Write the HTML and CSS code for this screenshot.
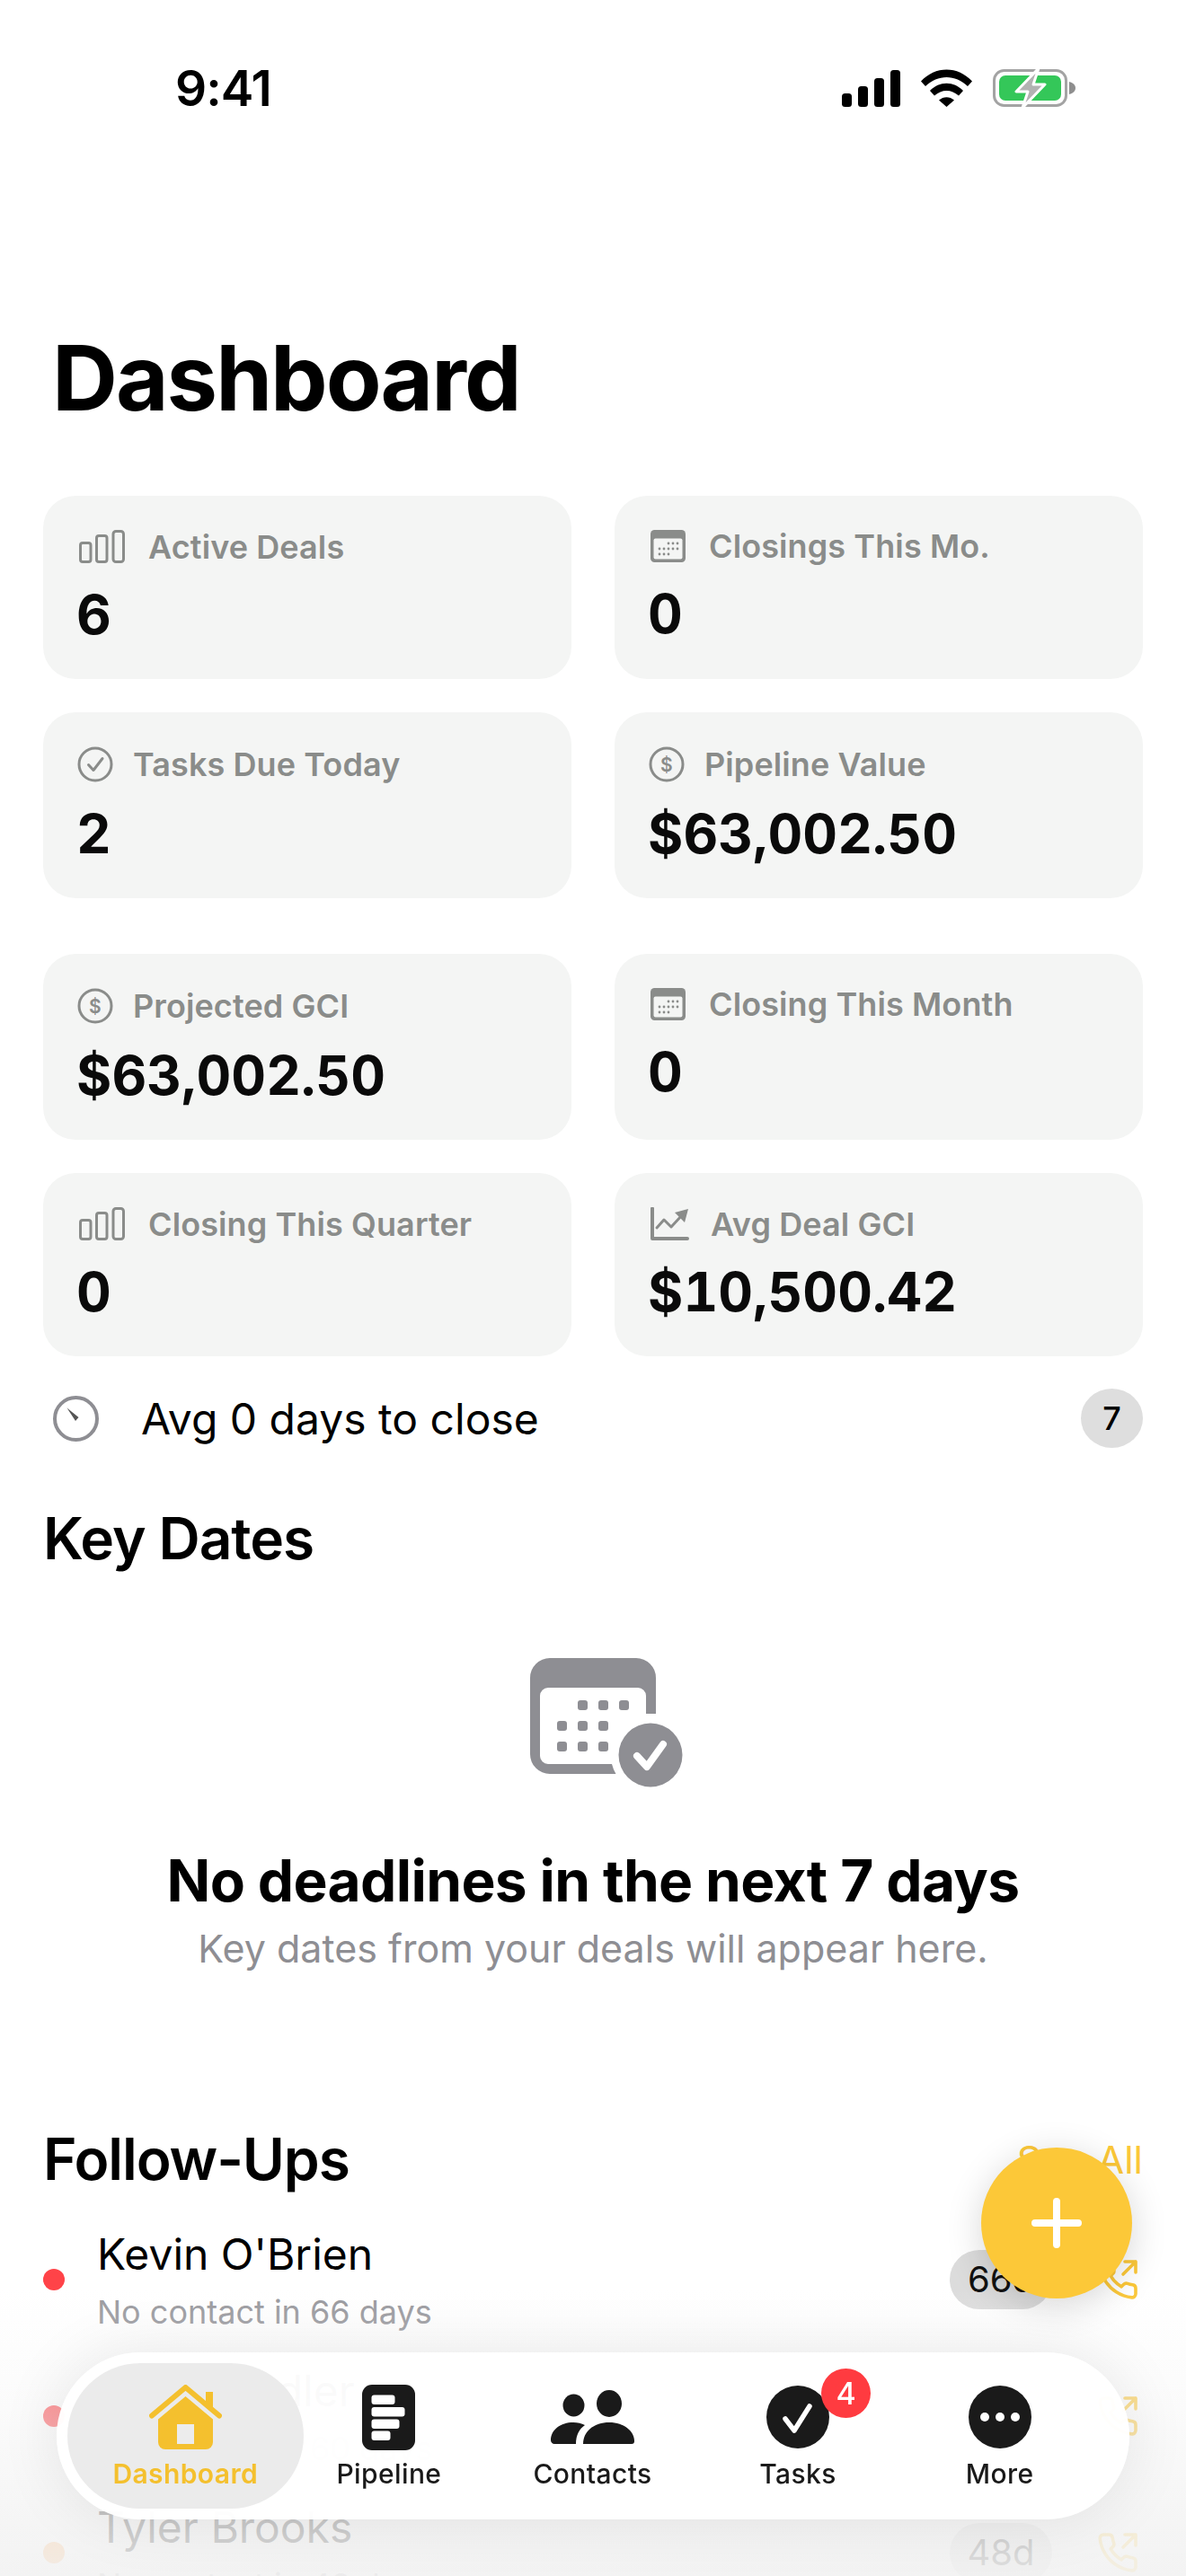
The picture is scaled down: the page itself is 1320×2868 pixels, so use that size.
FILE: index.html
```html
<!DOCTYPE html>
<html>
<head>
	<meta charset="UTF-8">
	<title>Dashboard</title>
	<link rel="stylesheet" href="styles.css">
</head>
<body>

	<svg class="defs" width="0" height="0">
		<symbol id="bars" viewBox="0 0 51 37">
			<rect x="1.5" y="14.5" width="11.5" height="21" rx="2.5"/>
			<rect x="19.5" y="6.5" width="11.5" height="29" rx="2.5"/>
			<rect x="38" y="1.5" width="11.5" height="34" rx="3"/>
		</symbol>
		<symbol id="cal" viewBox="0 0 39 36">
			<rect width="39" height="36" rx="4.5" fill="#8a8c8a"/>
			<rect x="3.5" y="9.5" width="32" height="23" rx="2" fill="#f4f5f4"/>
			<g fill="#8a8c8a">
				<circle cx="20" cy="15" r="1.4"/><circle cx="25" cy="15" r="1.4"/><circle cx="30" cy="15" r="1.4"/>
				<circle cx="10" cy="21" r="1.4"/><circle cx="15" cy="21" r="1.4"/><circle cx="20" cy="21" r="1.4"/><circle cx="25" cy="21" r="1.4"/><circle cx="30" cy="21" r="1.4"/>
				<circle cx="10" cy="27" r="1.4"/><circle cx="15" cy="27" r="1.4"/><circle cx="20" cy="27" r="1.4"/>
			</g>
		</symbol>
		<symbol id="phone" viewBox="0 0 24 24">
			<path d="M16 2h6v6M22 2l-7 7"/>
			<path d="M22 16.92v3a2 2 0 0 1-2.18 2 19.79 19.79 0 0 1-8.63-3.07 19.5 19.5 0 0 1-6-6 19.79 19.79 0 0 1-3.07-8.67A2 2 0 0 1 4.11 2h3a2 2 0 0 1 2 1.72 12.84 12.84 0 0 0 .7 2.81 2 2 0 0 1-.45 2.11L8.09 9.91a16 16 0 0 0 6 6l1.27-1.27a2 2 0 0 1 2.11-.45 12.84 12.84 0 0 0 2.81.7A2 2 0 0 1 22 16.92z"/>
		</symbol>
	</svg>

	<div class="screen">

		<!-- status bar -->
		<div class="status">
			<span class="time">9:41</span>
			<div class="status-icons">
				<svg width="65" height="41" viewBox="0 0 65 41"><rect y="26" width="11" height="15" rx="3.5"/><rect x="18" y="18" width="11" height="23" rx="3.5"/><rect x="36" y="9" width="11" height="32" rx="3.5"/><rect x="54" y="0" width="11" height="41" rx="3.5"/></svg>
				<svg width="57" height="42" viewBox="0 0 57 42"><path d="M0 13.5C15.500 -4 41.500 -4 57 13.500L52 19C38.500 5.500 18.500 5.500 5 19Z"/><path d="M10 24C20.500 13 36.500 13 47 24L42 29.500C34 22 23 22 15 29.500Z"/><path d="M20 34.500C25 30 32 30 37 34.500L28.500 42Z"/></svg>
				<svg width="93" height="44" viewBox="0 0 93 44">
					<rect x="1.500" y="2.500" width="80" height="39" rx="11" fill="none" stroke="#a3a3a3" stroke-width="3"/>
					<rect x="7" y="8" width="69" height="28" rx="7" fill="#34c759"/>
					<path d="M85 15c4 1 7 3.500 7 7s-3 6-7 7z" fill="#8e8e8e"/>
					<path d="M51 0 26 26h13L33 44 58 18H45Z" fill="#b2b2b2" stroke="#fff" stroke-width="3" stroke-linejoin="round"/>
				</svg>
			</div>
		</div>

		<h1 class="title">Dashboard</h1>

		<!-- stat cards -->
		<div class="stats">
			<div class="card">
				<div class="card-label"><svg class="ico" width="51" height="37"><use href="#bars"/></svg>Active Deals</div>
				<div class="card-value">6</div>
			</div>
			<div class="card">
				<div class="card-label"><svg width="39" height="36"><use href="#cal"/></svg>Closings This Mo.</div>
				<div class="card-value">0</div>
			</div>
			<div class="card">
				<div class="card-label"><svg class="round" width="40" height="40" viewBox="0 0 40 40"><circle class="ico" cx="20" cy="20" r="18"/><path class="ico" d="M12.500 20.500l5.500 6 10-13"/></svg>Tasks Due Today</div>
				<div class="card-value">2</div>
			</div>
			<div class="card">
				<div class="card-label"><svg class="round" width="40" height="40" viewBox="0 0 40 40"><circle class="ico" cx="20" cy="20" r="18"/><text class="ico-text" x="20" y="27.500" text-anchor="middle">$</text></svg>Pipeline Value</div>
				<div class="card-value">$63,002.50</div>
			</div>
		</div>

		<div class="stats stats-second">
			<div class="card">
				<div class="card-label"><svg class="round" width="40" height="40" viewBox="0 0 40 40"><circle class="ico" cx="20" cy="20" r="18"/><text class="ico-text" x="20" y="27.500" text-anchor="middle">$</text></svg>Projected GCI</div>
				<div class="card-value">$63,002.50</div>
			</div>
			<div class="card">
				<div class="card-label"><svg width="39" height="36"><use href="#cal"/></svg>Closing This Month</div>
				<div class="card-value">0</div>
			</div>
			<div class="card">
				<div class="card-label"><svg class="ico" width="51" height="37"><use href="#bars"/></svg>Closing This Quarter</div>
				<div class="card-value">0</div>
			</div>
			<div class="card">
				<div class="card-label"><svg class="chart" width="43" height="37" viewBox="0 0 43 37"><path class="ico ico-thick" d="M2 1.500V35H41"/><path class="ico" d="M7 23l8-9 8 8 12-13"/><path d="M27 6 42 2 38 17Z" fill="#8a8c8a"/></svg>Avg Deal GCI</div>
				<div class="card-value">$10,500.42</div>
			</div>
		</div>

		<div class="avg-row">
			<svg width="51" height="51" viewBox="0 0 51 51"><circle cx="25.500" cy="25.500" r="23.500" fill="none" stroke="#8e8e93" stroke-width="4"/><path d="M15.500 13.500l13 10.500-3.500 4z" fill="#555"/></svg>
			<span class="avg-text">Avg 0 days to close</span>
			<span class="count">7</span>
		</div>

		<h2 class="section-title key-title">Key Dates</h2>

		<!-- empty state -->
		<div class="empty">
			<svg width="170" height="144" viewBox="0 0 170 144">
				<path d="M22 0H118a22 22 0 0 1 22 22V62H129V42a9 9 0 0 0-9-9H20a9 9 0 0 0-9 9V109a9 9 0 0 0 9 9H91q1.500 6 4.500 11H22A22 22 0 0 1 0 107V22A22 22 0 0 1 22 0Z" fill="#8e8e93"/>
				<g fill="#8e8e93">
					<rect x="53" y="47" width="11" height="11" rx="3"/><rect x="76" y="47" width="11" height="11" rx="3"/><rect x="99" y="47" width="11" height="11" rx="3"/>
					<rect x="30" y="70" width="11" height="11" rx="3"/><rect x="53" y="70" width="11" height="11" rx="3"/><rect x="76" y="70" width="11" height="11" rx="3"/>
					<rect x="30" y="93" width="11" height="11" rx="3"/><rect x="53" y="93" width="11" height="11" rx="3"/><rect x="76" y="93" width="11" height="11" rx="3"/>
					<circle cx="134" cy="108" r="35.500"/>
				</g>
				<path d="M119 109l11 12 18-25" fill="none" stroke="#fff" stroke-width="8" stroke-linecap="round" stroke-linejoin="round"/>
			</svg>
			<h3 class="empty-title">No deadlines in the next 7 days</h3>
			<p class="empty-sub">Key dates from your deals will appear here.</p>
		</div>

		<!-- follow ups -->
		<div class="section-head">
			<h2 class="section-title">Follow-Ups</h2>
			<span class="see-all">See All</span>
		</div>

		<div class="follow-list">
			<div class="follow">
				<span class="dot dot-red"></span>
				<div class="follow-body">
					<div class="follow-name">Kevin O'Brien</div>
					<div class="follow-sub">No contact in 66 days</div>
				</div>
				<span class="days">66d</span>
				<svg class="phone" width="48" height="48"><use href="#phone"/></svg>
			</div>
			<div class="follow">
				<span class="dot dot-red"></span>
				<div class="follow-body">
					<div class="follow-name">Rachel Adler</div>
					<div class="follow-sub">No contact in 60 days</div>
				</div>
				<span class="days">60d</span>
				<svg class="phone" width="48" height="48"><use href="#phone"/></svg>
			</div>
			<div class="follow">
				<span class="dot dot-orange"></span>
				<div class="follow-body">
					<div class="follow-name">Tyler Brooks</div>
					<div class="follow-sub">No contact in 48 days</div>
				</div>
				<span class="days">48d</span>
				<svg class="phone" width="48" height="48"><use href="#phone"/></svg>
			</div>
		</div>

		<div class="fade"></div>

		<div class="fab">
			<svg width="56" height="56" viewBox="0 0 56 56"><path d="M28 4v48M4 28h48" stroke="#fff" stroke-width="8" stroke-linecap="round"/></svg>
		</div>

		<!-- tab bar -->
		<nav class="tabbar">
			<div class="tab active">
				<div class="tab-icon">
					<svg width="81" height="72" viewBox="0 0 81 72">
						<path d="M3 34.500 40.500 3 78 34.500" fill="none" stroke="#f4c02e" stroke-width="6" stroke-linecap="round" stroke-linejoin="round"/>
						<path d="M63 8h8v24l-8-7z" fill="#f4c02e"/>
						<path d="M40.500 13 71 38.500V64a8 8 0 0 1-8 8H18a8 8 0 0 1-8-8V38.500Z" fill="#f4c02e"/>
						<rect x="31" y="44" width="19" height="22" fill="#ececec"/>
					</svg>
				</div>
				<span class="tab-label">Dashboard</span>
			</div>
			<div class="tab">
				<div class="tab-icon">
					<svg width="59" height="73" viewBox="0 0 59 73">
						<rect width="59" height="73" rx="11" fill="#1a1a1a"/>
						<g fill="#fff">
							<rect x="10.500" y="11.500" width="26" height="10.500" rx="3"/>
							<rect x="10.500" y="25" width="37" height="10.500" rx="3"/>
							<rect x="10.500" y="38.500" width="31" height="10.500" rx="3"/>
							<rect x="10.500" y="51.500" width="21" height="10.500" rx="3"/>
						</g>
					</svg>
				</div>
				<span class="tab-label">Pipeline</span>
			</div>
			<div class="tab">
				<div class="tab-icon">
					<svg width="93" height="60" viewBox="0 0 93 60">
						<g fill="#1a1a1a">
							<ellipse cx="25.500" cy="17" rx="12" ry="12.500"/>
							<path d="M0 56C0 44 11 36 25 36c5 0 9 1 13 3-6 4-10 11-10 21H4c-2 0-4-2-4-4Z"/>
							<ellipse cx="65" cy="15" rx="14" ry="15"/>
							<path d="M36 60c0-14 12-24 29-24s28 10 28 21c0 2-1 3-3 3Z"/>
						</g>
					</svg>
				</div>
				<span class="tab-label">Contacts</span>
			</div>
			<div class="tab tab-tasks">
				<div class="tab-icon">
					<svg width="70" height="70" viewBox="0 0 70 70">
						<circle cx="35" cy="35" r="35" fill="#1a1a1a"/>
						<path d="M21 37l10 13 17-27" fill="none" stroke="#fff" stroke-width="5.500" stroke-linecap="round" stroke-linejoin="round"/>
					</svg>
					<span class="badge">4</span>
				</div>
				<span class="tab-label">Tasks</span>
			</div>
			<div class="tab">
				<div class="tab-icon">
					<svg width="70" height="70" viewBox="0 0 70 70">
						<circle cx="35" cy="35" r="35" fill="#1a1a1a"/>
						<g fill="#fff"><circle cx="18" cy="35" r="5"/><circle cx="35" cy="35" r="5"/><circle cx="52" cy="35" r="5"/></g>
					</svg>
				</div>
				<span class="tab-label">More</span>
			</div>
		</nav>

	</div>
</body>
</html>
```

FILE: styles.css
```css
* { margin: 0; padding: 0; box-sizing: border-box; }

html, body {
	width: 100%;
	height: 100%;
	background: #fff;
	color: #000;
	font-family: Inter, "Liberation Sans", sans-serif;
}

.defs {
	position: absolute;
}

.screen {
	position: relative;
	width: 1320px;
	height: 2868px;
	overflow: hidden;
	background: #fff;
}

/* status bar */
.status {
	display: flex;
	justify-content: space-between;
	align-items: center;
	height: 60px;
	margin-top: 68px;
	padding: 0 122px 0 195px;
}
.time {
	font-size: 55px;
	font-weight: 600;
	letter-spacing: -1px;
}
.status-icons {
	display: flex;
	align-items: center;
	gap: 23px;
}

.title {
	margin: 234px 0 74px 58px;
	font-size: 101px;
	line-height: 116px;
	font-weight: 700;
	letter-spacing: -2px;
}

/* stat cards */
.stats {
	display: grid;
	grid-template-columns: 588px 588px;
	gap: 37px 48px;
	padding: 0 48px;
}
.stats-second {
	margin-top: 62px;
}
.card {
	padding: 38px 40px 34px;
	border-radius: 36px;
	background: #f4f5f4;
}
.card-label {
	display: flex;
	align-items: center;
	gap: 26px;
	font-size: 36px;
	line-height: 36px;
	font-weight: 600;
	letter-spacing: .1px;
	color: #8a8c8a;
}
.card-label svg {
	flex: none;
}
.card-label .round {
	margin: 0 -4px 0 -2px;
}
.card-label .chart {
	margin-right: -2px;
}
.ico {
	fill: none;
	stroke: #8a8c8a;
	stroke-width: 3;
	stroke-linecap: round;
	stroke-linejoin: round;
}
.ico-thick {
	stroke-width: 4;
}
.ico-text {
	fill: #8a8c8a;
	font-size: 21px;
	font-weight: 600;
}
.card-value {
	margin: 19px 0 0 -3px;
	font-size: 60px;
	line-height: 76px;
	font-weight: 700;
	font-variant-numeric: tabular-nums;
	letter-spacing: .1px;
	color: #0a0a0a;
}

.avg-row {
	display: flex;
	align-items: center;
	margin-top: 36px;
	padding: 0 48px 0 59px;
}
.avg-text {
	flex: 1;
	margin-left: 47px;
	font-size: 48px;
}
.count {
	width: 69px;
	height: 66px;
	border-radius: 50%;
	background: #dedede;
	font-size: 36px;
	font-weight: 500;
	line-height: 66px;
	text-align: center;
}

.section-title {
	font-size: 64px;
	line-height: 76px;
	font-weight: 600;
	letter-spacing: -1.1px;
}
.key-title {
	margin: 63px 0 0 48px;
}

/* empty state */
.empty {
	padding-top: 95px;
	text-align: center;
}
.empty svg {
	display: block;
	margin: 0 0 0 590px;
}
.empty-title {
	margin-top: 64px;
	font-size: 64px;
	line-height: 80px;
	font-weight: 700;
	letter-spacing: -.65px;
}
.empty-sub {
	margin-top: 5px;
	font-size: 43px;
	line-height: 60px;
	color: #8e8e93;
}

/* follow ups */
.section-head {
	display: flex;
	justify-content: space-between;
	align-items: center;
	margin-top: 167px;
	padding: 0 48px;
}
.see-all {
	font-size: 43px;
	color: #fcc838;
}
.follow-list {
	display: flex;
	flex-direction: column;
	gap: 30px;
	margin-top: 35px;
	padding: 0 48px;
}
.follow {
	display: flex;
	align-items: center;
	height: 122px;
}
.dot {
	flex: none;
	width: 24px;
	height: 24px;
	margin-right: 36px;
	border-radius: 50%;
}
.dot-red { background: #ff4348; }
.dot-orange { background: #ff9f43; }
.follow-body {
	flex: 1;
}
.follow-name {
	font-size: 48px;
	line-height: 64px;
}
.follow-sub {
	margin-top: 8px;
	font-size: 36px;
	line-height: 48px;
	color: #98989d;
}
.days {
	width: 114px;
	height: 66px;
	border-radius: 33px;
	background: #dcdcdc;
	font-size: 40px;
	line-height: 66px;
	text-align: center;
	color: #111;
}
.phone {
	margin: 0 4px 0 49px;
	fill: none;
	stroke: #fcc838;
	stroke-width: 1.800;
	stroke-linecap: round;
	stroke-linejoin: round;
}

/* things that lie over the page */
.fade {
	position: absolute;
	left: 0;
	right: 0;
	bottom: 0;
	height: 320px;
	background: linear-gradient(rgba(250, 250, 250, 0), rgba(247, 247, 247, .5) 42%, rgba(243, 243, 243, .82) 80%, rgba(242, 242, 242, .92));
}
.fab {
	position: absolute;
	left: 1092px;
	top: 2391px;
	display: flex;
	align-items: center;
	justify-content: center;
	width: 168px;
	height: 168px;
	border-radius: 50%;
	background: #fcc838;
	box-shadow: 0 8px 40px rgba(0, 0, 0, .16);
}
.tabbar {
	position: absolute;
	left: 63px;
	top: 2619px;
	display: grid;
	grid-template-columns: repeat(5, 1fr);
	width: 1194px;
	height: 186px;
	padding: 32px 31px 0 30px;
	border-radius: 93px;
	background: rgba(255, 255, 255, .97);
	box-shadow: 0 0 70px rgba(0, 0, 0, .09);
}
.tab {
	position: relative;
	display: flex;
	flex-direction: column;
	align-items: center;
}
.tab-tasks {
	padding-left: 4px;
}
.tab.active::before {
	content: "";
	position: absolute;
	left: -18px;
	top: -20px;
	width: 263px;
	height: 162px;
	border-radius: 81px;
	background: rgba(228, 228, 228, .75);
	backdrop-filter: blur(6px);
}
.tab-icon {
	position: relative;
	display: flex;
	align-items: center;
	justify-content: center;
	height: 80px;
}
.tab-label {
	position: relative;
	margin-top: 5px;
	font-size: 30px;
	line-height: 36px;
	font-weight: 500;
	letter-spacing: .4px;
	color: #1a1a1a;
}
.active .tab-label {
	color: #f4c02e;
	font-weight: 600;
}
.badge {
	position: absolute;
	left: 61px;
	top: -14px;
	width: 55px;
	height: 55px;
	border-radius: 50%;
	background: #ff3b40;
	color: #fff;
	font-size: 34px;
	font-weight: 500;
	line-height: 55px;
	text-align: center;
}
```
